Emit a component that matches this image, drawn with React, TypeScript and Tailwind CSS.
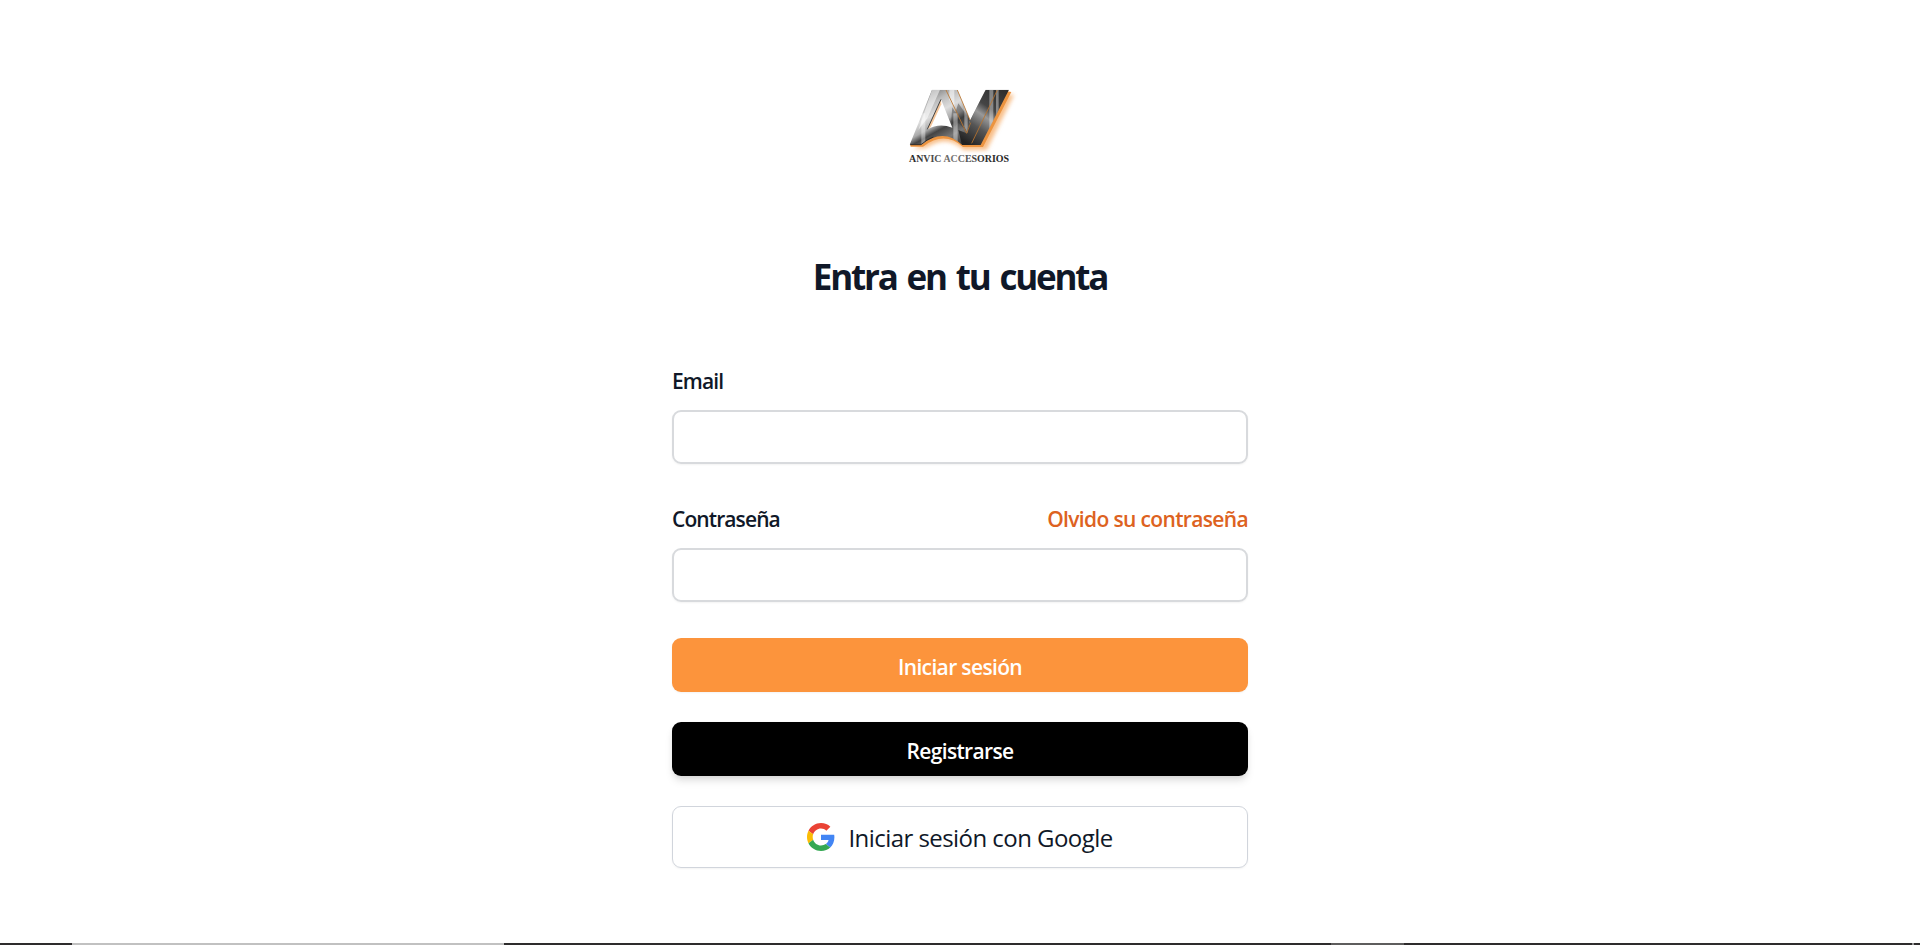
function Logo() {
  return (
    <svg viewBox="0 0 420 330" className="h-[110px] w-[140px]" role="img" aria-label="Anvic Accesorios">
      <defs>
        <linearGradient id="metalA" x1="90" y1="40" x2="200" y2="240" gradientUnits="userSpaceOnUse">
          <stop offset="0" stopColor="#999" />
          <stop offset=".14" stopColor="#777" />
          <stop offset=".3" stopColor="#bbb" />
          <stop offset=".45" stopColor="#ddd" />
          <stop offset=".58" stopColor="#aaa" />
          <stop offset=".66" stopColor="#444" />
          <stop offset=".8" stopColor="#777" />
          <stop offset="1" stopColor="#2a2a2a" />
        </linearGradient>
        <linearGradient id="metalV" x1="230" y1="220" x2="340" y2="60" gradientUnits="userSpaceOnUse">
          <stop offset="0" stopColor="#222" />
          <stop offset=".3" stopColor="#555" />
          <stop offset=".5" stopColor="#999" />
          <stop offset=".65" stopColor="#444" />
          <stop offset="1" stopColor="#2e2e2e" />
        </linearGradient>
        <linearGradient id="word" x1="57" y1="0" x2="357" y2="0" gradientUnits="userSpaceOnUse">
          <stop offset="0" stopColor="#222" />
          <stop offset=".3" stopColor="#555" />
          <stop offset=".45" stopColor="#777" />
          <stop offset=".7" stopColor="#333" />
          <stop offset="1" stopColor="#222" />
        </linearGradient>
        <filter id="soft" x="-20%" y="-20%" width="140%" height="140%">
          <feGaussianBlur stdDeviation="6" />
        </filter>
        <clipPath id="face">
          <path clipRule="evenodd" d="M126 59H202L240 150L287 59H357L272 225H217Q160 171 94 224H59ZM153 88L112 178Q147 158 187 173Z" />
        </clipPath>
      </defs>
      <path fill="#f5a860" filter="url(#soft)" opacity=".75" d="M290 74H372L290 240H222Q170 190 108 234L72 236L94 218Q160 168 215 215H262Z" />
      <path fill="#ec9440" d="M340 62L364 66L279 231H219Q163 181 99 230H62L60 223H94Q160 169 217 219H268Z" />
      <path fill="#f5c79c" d="M153 88L112 178L122 172L154 103Z" />
      <g clipPath="url(#face)">
        <path fill="url(#metalA)" d="M50 50H205L240 150L232 190L250 230H50Z" />
        <path fill="url(#metalV)" d="M287 50H365V230H217L205 180L230 190L240 150Z" />
        <path fill="#333" opacity=".4" d="M205 100L240 150L232 185L190 145ZM187 112L210 150L195 170L183 155Z" />
        <path fill="#fff" opacity=".55" d="M126 59H150L112 145L85 180ZM178 59H193V110L178 90Z" />
        <path fill="#fff" opacity=".38" d="M94 130H106V225H94ZM190 130H203V225H190ZM223 95H233V190L223 170ZM298 59H310V190H298ZM318 59H326V140H318Z" />
      </g>
      <path fill="none" stroke="#b9742c" strokeWidth="2.5" d="M168 60L230 190L242 158M202 60L240 150M322 60L245 220" />
      <path fill="none" stroke="#222" strokeWidth="2.5" d="M153 88L112 178M61 224H93Q112 207 130 201" />
      <text x="57" y="276" fill="url(#word)" textLength="300" lengthAdjust="spacingAndGlyphs" fontSize="34" className="font-['Liberation_Serif',serif] font-bold">
        ANVIC ACCESORIOS
      </text>
    </svg>
  );
}

function GoogleIcon() {
  return (
    <svg viewBox="0 0 48 48" className="size-[28px] shrink-0" aria-hidden="true">
      <path fill="#EA4335" d="M24 9.5c3.54 0 6.71 1.22 9.21 3.6l6.85-6.85C35.9 2.38 30.47 0 24 0 14.62 0 6.51 5.38 2.56 13.22l7.98 6.19C12.43 13.72 17.74 9.5 24 9.5z" />
      <path fill="#4285F4" d="M46.98 24.55c0-1.57-.15-3.09-.38-4.55H24v9.02h12.94c-.58 2.96-2.26 5.48-4.78 7.18l7.73 6c4.51-4.18 7.09-10.36 7.09-17.65z" />
      <path fill="#FBBC05" d="M10.53 28.59c-.48-1.45-.76-2.99-.76-4.59s.27-3.14.76-4.59l-7.98-6.19C.92 16.46 0 20.12 0 24c0 3.88.92 7.54 2.56 10.78l7.97-6.19z" />
      <path fill="#34A853" d="M24 48c6.48 0 11.93-2.13 15.89-5.81l-7.73-6c-2.15 1.45-4.92 2.3-8.16 2.3-6.26 0-11.57-4.22-13.47-9.91l-7.98 6.19C6.51 42.62 14.62 48 24 48z" />
    </svg>
  );
}

export default function App() {
  return (
    <div className="flex h-[945px] flex-col overflow-hidden bg-white font-['Open_Sans','Noto_Sans',sans-serif] text-gray-900">
      <main className="flex flex-1 flex-col items-center pt-[70px]">
        <Logo />
        <h1 className="mt-[70px] text-[35px] leading-[54px] font-bold tracking-[-2.2px] [word-spacing:3px]">Entra en tu cuenta</h1>
        <form className="mt-[59px] flex w-[576px] flex-col text-[21px] leading-[36px] font-semibold tracking-[-0.65px]">
          <label htmlFor="email" className="tracking-[-0.9px]">Email</label>
          <input id="email" type="email" className="mt-[11px] h-[54px] rounded-[9px] border-2 border-[#d8dadd] px-3 shadow-xs" />
          <div className="mt-[37px] flex justify-between">
            <label htmlFor="password" className="tracking-[-0.9px]">Contraseña</label>
            <a href="#" className="text-[#dd6221]">Olvido su contraseña</a>
          </div>
          <input id="password" type="password" className="mt-[11px] h-[54px] rounded-[9px] border-2 border-[#d8dadd] px-3 shadow-xs" />
          <button type="button" className="mt-9 h-[54px] rounded-[9px] bg-[#fc943c] pt-[3px] text-white shadow-xs">Iniciar sesión</button>
          <button type="button" className="mt-[30px] h-[54px] rounded-[9px] bg-black pt-[3px] text-white shadow-[0_6px_9px_-1px_rgba(0,0,0,0.1),0_3px_6px_-2px_rgba(0,0,0,0.1)]">Registrarse</button>
          <button type="button" className="mt-[30px] flex h-[62px] items-center justify-center gap-[13px] rounded-[9px] border border-gray-300 text-[24px] font-normal tracking-[-0.55px] shadow-xs">
            <GoogleIcon />
            <span className="pt-0.5">Iniciar sesión con Google</span>
          </button>
        </form>
      </main>
      <div className="flex h-0.5 shrink-0 bg-[#2e2c2d]">
        <div className="ml-[72px] w-[432px] bg-[#c1c1c1]" />
        <div className="ml-[827px] w-[73px] bg-[#5e5d5d]" />
        <div className="ml-[508px] w-0.5 bg-[#999]" />
      </div>
    </div>
  );
}
